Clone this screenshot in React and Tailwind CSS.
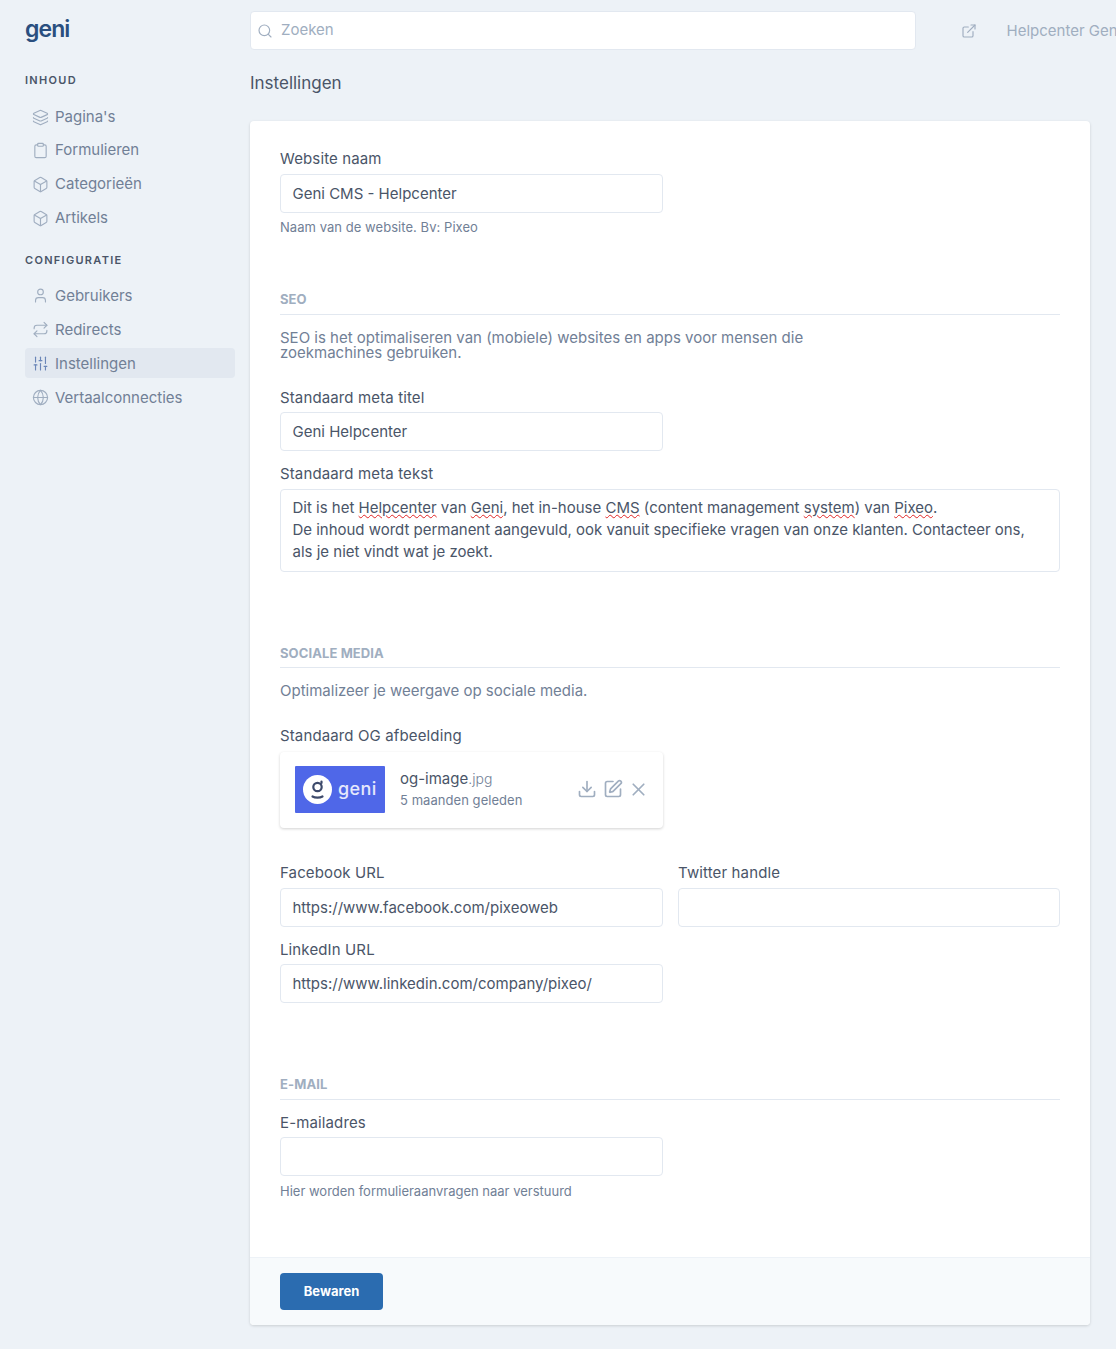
import React from "react";
import { Layers, Clipboard, Box, User, Repeat, SlidersVertical, Globe, Search, ExternalLink, Download, SquarePen, X } from "lucide-react";

function NavItem({ icon: Icon, label, active, className = "", textClass = "" }) {
  return (
    <div className={`flex h-[30px] items-center rounded pl-[6.5px] text-[15px] text-[#718096] ${active ? "bg-[#e2e8f0]" : ""} ${className}`}>
      <Icon size={17} strokeWidth={1.6} className={`mr-[6.5px] shrink-0 ${active ? "text-[#6b86b8]" : "text-[#a0aec0]"}`} />
      <span className={textClass}>{label}</span>
    </div>
  );
}

function Label({ children, className = "" }) {
  return <div className={`text-[15px] leading-[18px] tracking-[0.13px] text-[#4a5568] ${className}`}>{children}</div>;
}

function Field({ value, className = "" }) {
  return (
    <div className={`flex h-[39px] items-center rounded border border-[#e2e8f0] bg-white px-[11.5px] pt-[1px] text-[15px] text-[#4a5568] ${className}`}>
      {value}
    </div>
  );
}

function Section({ children, className = "" }) {
  return (
    <div className={`border-b border-[#e2e8f0] text-[13px] font-bold leading-[16px] tracking-[0.1px] text-[#a0aec0] ${className}`}>
      {children}
    </div>
  );
}

function Sp({ children }) {
  return <span className="underline decoration-wavy decoration-[#e02424] decoration-1 underline-offset-1">{children}</span>;
}

export default function App() {
  return (
    <div className="flex h-[1349px] w-[1116px] overflow-hidden bg-[#edf2f7] text-[#4a5568]" style={{ fontFamily: "Inter, sans-serif" }}>
      <aside className="w-[250px] shrink-0 pl-[25px] pr-[15px]">
        <div className="mt-[14px] h-[30px] text-[23px] font-semibold leading-[30px] tracking-[-0.04em] text-[#2a4f7f]">geni</div>
        <div className="mt-[28px] text-[11px] font-semibold leading-[16px] tracking-[1.3px] text-[#4a5568]">INHOUD</div>
        <div className="mt-[14px] flex flex-col gap-[4px]">
          <NavItem icon={Layers} label="Pagina's" />
          <NavItem icon={Clipboard} label="Formulieren" className="-mt-[1px]" />
          <NavItem icon={Box} label="Categorieën" />
          <NavItem icon={Box} label="Artikels" />
        </div>
        <div className="mt-[19px] text-[11px] font-semibold leading-[16px] tracking-[1.3px] text-[#4a5568]">CONFIGURATIE</div>
        <div className="mt-[12px] flex flex-col gap-[4px]">
          <NavItem icon={User} label="Gebruikers" textClass="mt-[2px]" />
          <NavItem icon={Repeat} label="Redirects" textClass="mt-[2px]" />
          <NavItem icon={SlidersVertical} label="Instellingen" active textClass="mt-[2px]" />
          <NavItem icon={Globe} label="Vertaalconnecties" textClass="mt-[2px]" />
        </div>
      </aside>

      <main className="w-[840px] shrink-0">
        <div className="mt-[11px] flex h-[39px] items-center">
          <div className="flex h-[39px] w-[666px] shrink-0 items-center rounded border border-[#e2e8f0] bg-white pl-[6px] text-[15px] text-[#a0aec0]">
            <Search size={16} strokeWidth={1.75} className="mr-[8px]" />
            Zoeken
          </div>
          <ExternalLink size={16} strokeWidth={1.75} className="ml-[44.5px] shrink-0 text-[#a0aec0]" />
          <span className="ml-[30px] mt-[1px] whitespace-nowrap text-[15px] text-[#a0aec0]">Helpcenter Geni</span>
        </div>
        <div className="mt-[22px] text-[17px] leading-[22px] text-[#4a5568]">Instellingen</div>

        <div className="mt-[27px] h-[1204px] rounded bg-white shadow-[0_1px_3px_rgba(0,0,0,0.15)] flex flex-col">
          <div className="flex-1 px-[30px] pt-[29px]">
            <Label>Website naam</Label>
            <Field value="Geni CMS - Helpcenter" className="mt-[6px] w-[383px]" />
            <div className="mt-[6px] text-[13px] leading-[16px] tracking-[0.05px] text-[#718096]">Naam van de website. Bv: Pixeo</div>

            <Section className="mt-[56px] pb-[7px]">SEO</Section>
            <p className="mt-[15px] max-w-[560px] text-[15px] leading-[15px] text-[#718096]">
              SEO is het optimaliseren van (mobiele) websites en apps voor mensen die zoekmachines gebruiken.
            </p>
            <Label className="mt-[29px]">Standaard meta titel</Label>
            <Field value="Geni Helpcenter" className="mt-[5px] w-[383px]" />
            <Label className="mt-[14px]">Standaard meta tekst</Label>
            <div className="mt-[6px] h-[83px] rounded border border-[#e2e8f0] px-[11.5px] py-[7px] text-[15px] leading-[22px] text-[#4a5568]">
              Dit is het <Sp>Helpcenter</Sp> van <Sp>Geni</Sp>, het in-house <Sp>CMS</Sp> (content management <Sp>system</Sp>) van <Sp>Pixeo</Sp>.
              <br />
              <span className="tracking-[-0.02px]">De inhoud wordt permanent aangevuld, ook vanuit specifieke vragen van onze klanten. Contacteer ons,</span>
              <br />
              als je niet vindt wat je zoekt.
            </div>

            <Section className="mt-[73px] pb-[6px]">SOCIALE MEDIA</Section>
            <p className="mt-[14px] text-[15px] leading-[18px] text-[#718096]">Optimalizeer je weergave op sociale media.</p>
            <Label className="mt-[27px]">Standaard OG afbeelding</Label>
            <div className="mt-[7px] flex h-[76px] w-[383px] items-center rounded bg-white pb-[2px] pl-[15px] pr-[14px] shadow-[0_1px_3px_rgba(0,0,0,0.18)]">
              <div className="flex h-[47px] w-[90px] shrink-0 items-center rounded-[1px] bg-[#4f67e8] pl-[8px]">
                <div className="flex h-[29px] w-[29px] items-center justify-center rounded-full bg-white">
                  <svg width="15" height="19" viewBox="0 0 15 19" fill="none" stroke="#3d4a6b" strokeWidth="2.2">
                    <circle cx="7.5" cy="7" r="4.2" />
                    <path d="M11.5 1.5 V3 M2.5 16.5 C5 18 10 18 12.5 16.5" strokeLinecap="round" />
                  </svg>
                </div>
                <span className="ml-[6px] text-[18px] font-medium leading-none tracking-[0.02em] text-white/85">geni</span>
              </div>
              <div className="ml-[15px] flex-1">
                <div className="text-[15px] leading-[18px] text-[#4a5568]">og-image<span className="text-[14px] font-light text-[#718096]">.jpg</span></div>
                <div className="mt-[4px] text-[13px] leading-[16px] tracking-[0.05px] text-[#718096]">5 maanden geleden</div>
              </div>
              <Download size={20} strokeWidth={2} className="text-[#a0aec0]" />
              <SquarePen size={20} strokeWidth={2} className="ml-[6px] text-[#a0aec0]" />
              <X size={21} strokeWidth={2} className="ml-[5px] text-[#a0aec0]" />
            </div>

            <div className="mt-[36px] grid grid-cols-[383px_382px] gap-x-[15px]">
              <div>
                <Label>Facebook URL</Label>
                <Field value="https://www.facebook.com/pixeoweb" className="mt-[6px]" />
              </div>
              <div>
                <Label>Twitter handle</Label>
                <Field value="" className="mt-[6px]" />
              </div>
              <div className="mt-[14px]">
                <Label>LinkedIn URL</Label>
                <Field value="https://www.linkedin.com/company/pixeo/" className="mt-[5px]" />
              </div>
            </div>

            <Section className="mt-[73px] pb-[7px]">E-MAIL</Section>
            <Label className="mt-[14px]">E-mailadres</Label>
            <Field value="" className="mt-[5px] w-[383px]" />
            <div className="mt-[7px] text-[13px] leading-[16px] text-[#718096]">Hier worden formulieraanvragen naar verstuurd</div>
          </div>

          <div className="flex h-[68px] items-center rounded-b border-t border-[#edf2f7] bg-[#f7fafc] px-[30px]">
            <div className="flex h-[37px] w-[103px] items-center justify-center rounded bg-[#2b6cb0] text-[13px] font-bold text-white">Bewaren</div>
          </div>
        </div>
      </main>
    </div>
  );
}
